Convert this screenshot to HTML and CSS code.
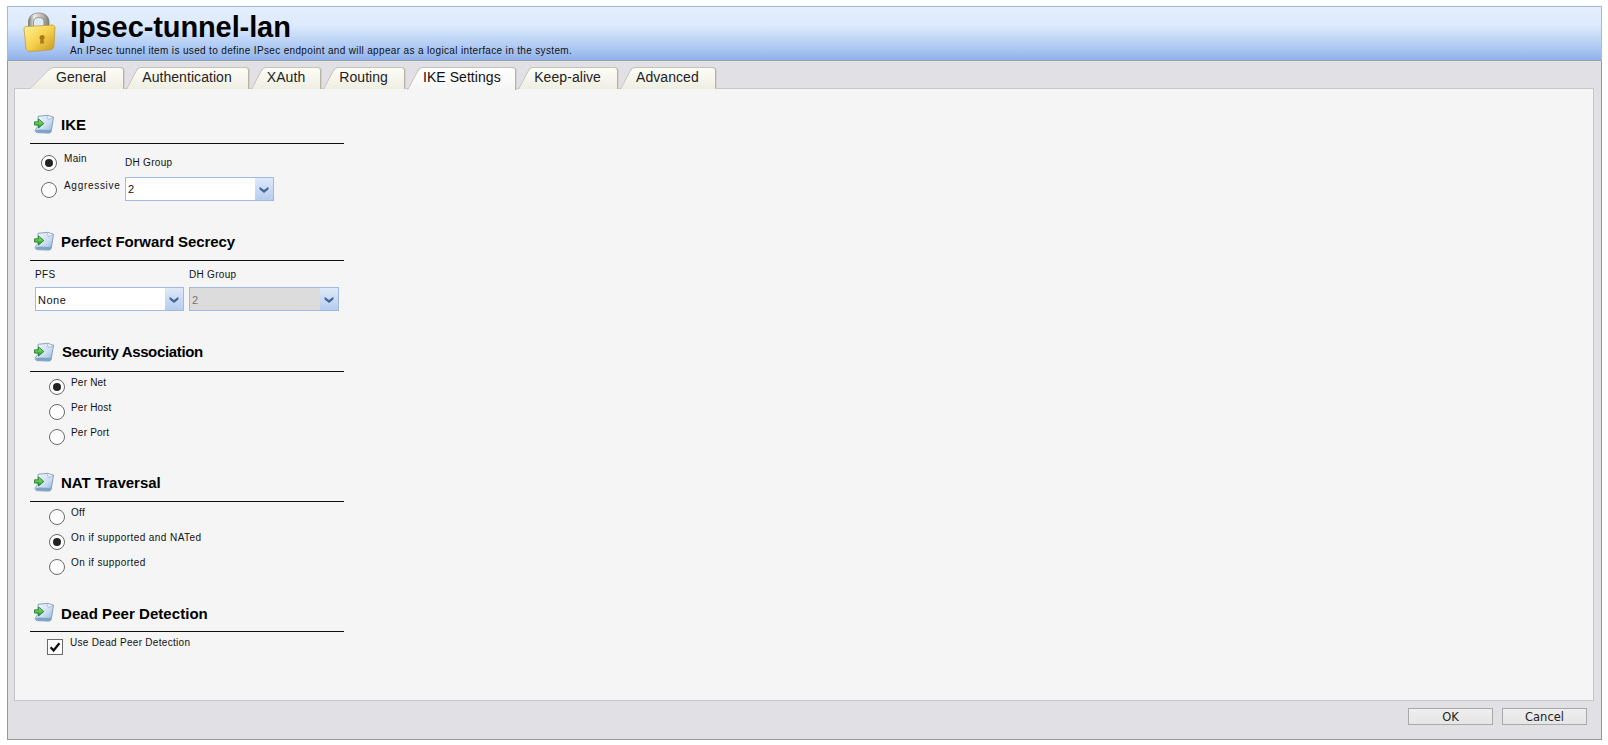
FILE: index.html
```html
<!DOCTYPE html>
<html lang="en">
<head>
<meta charset="utf-8">
<title>ipsec-tunnel-lan</title>
<link rel="stylesheet" href="styles.css">
</head>
<body>
<svg class="defs" width="0" height="0" aria-hidden="true">
  <defs>
    <linearGradient id="pg" x1="0" y1="0" x2="1" y2="1"><stop offset="0" stop-color="#f6f9fd"/><stop offset=".6" stop-color="#c9dcef"/><stop offset="1" stop-color="#84acd6"/></linearGradient>
    <linearGradient id="ag" x1="0" y1="0" x2="0" y2="1"><stop offset="0" stop-color="#a2e86a"/><stop offset="1" stop-color="#1d9f30"/></linearGradient>
    <symbol id="sec" viewBox="0 0 22 22">
      <path d="M4.5 2.5 L15 1.5 L21.5 3.5 L19 18.5 C18.7 20.5 17.6 21 16 21 L3.5 20.5 C2 20.3 1.2 19.3 1.2 18 L4 14 Z" fill="url(#pg)" stroke="#6f92b3" stroke-width=".9"/>
      <path d="M2 18 C5 16.5 10 17 15.5 17.6 C17 17.8 18.2 17.4 19.3 16.3 L18.8 19 C18.5 20.4 17.5 20.8 16 20.8 L3.6 20.2 C2.5 20 1.9 19.2 2 18 Z" fill="#7ea3c9"/>
      <path d="M14.8 1.8 L15.6 6.2 L21.2 4" fill="#eef4fb" stroke="#8fabc7" stroke-width=".7"/>
      <path d="M.6 8.6 H5 V5.4 L10.8 10.4 L5 15.4 V12.2 H.6 Z" fill="url(#ag)" stroke="#16782a" stroke-width=".9"/>
    </symbol>
    <symbol id="chev" viewBox="0 0 18 24">
      <path d="M4.2 9.5 L9 13.2 L13.8 9.5 L13.8 12.5 L9 16.4 L4.2 12.5 Z" fill="#46669a"/>
    </symbol>
  </defs>
</svg>
<main class="frame">
  <header class="top">
    <svg class="lock" viewBox="0 0 36 40" width="36" height="40" aria-hidden="true">
      <defs>
        <linearGradient id="sh" x1="0" y1="0" x2="1" y2="0"><stop offset="0" stop-color="#77776e"/><stop offset=".28" stop-color="#eeeee6"/><stop offset=".7" stop-color="#b4b4aa"/><stop offset="1" stop-color="#7d7d74"/></linearGradient>
        <linearGradient id="bd" x1="0" y1="0" x2="1" y2="1"><stop offset="0" stop-color="#fff19a"/><stop offset=".5" stop-color="#f6d24f"/><stop offset="1" stop-color="#c8961f"/></linearGradient>
      </defs>
      <path d="M6.5 16 V10 C6.5 4 11 1 16.5 1 C22.5 1 27 4 27 10 V15 H22 V10 C22 7 20 5.5 16.5 5.5 C13.5 5.5 11.5 7 11.5 10 V15.5 Z" fill="url(#sh)" stroke="#77776f" stroke-width=".7"/>
      <path d="M2 17 C2 15 3 14.5 5 14.5 L30 13 C32 13 33 14 33 16 L32 33 C32 36 30.5 37.5 28 37.8 L9 39.5 C6 39.5 4.5 38.5 4 36 Z" fill="url(#bd)" stroke="#c0952a" stroke-width=".7"/>
      <path d="M20 23 C21.8 23 22.8 24.2 22.7 25.6 C22.6 26.5 22.2 27.2 21.5 27.7 L22 31.5 H18 L18.5 27.8 C17.8 27.3 17.4 26.5 17.5 25.6 C17.6 24.1 18.7 23 20 23 Z" fill="#a9791a"/>
    </svg>
    <div class="top-text">
      <h1 class="title">ipsec-tunnel-lan</h1>
      <p class="sub">An IPsec tunnel item is used to define IPsec endpoint and will appear as a logical interface in the system.</p>
    </div>
  </header>

  <nav class="tabs">
    <a class="tab tab-first">General</a>
    <a class="tab t2">Authentication</a>
    <a class="tab t3">XAuth</a>
    <a class="tab t4">Routing</a>
    <a class="tab active">IKE Settings</a>
    <a class="tab t6">Keep-alive</a>
    <a class="tab t7">Advanced</a>
  </nav>

  <section class="panel">
    <div class="column">
      <div class="group g-ike">
        <h2 class="head"><svg class="sec-ico"><use href="#sec"/></svg><span>IKE</span></h2>
        <div class="ike-body">
          <div class="ike-radios">
            <label class="opt"><input class="radio" type="radio" name="ike" checked><span>Main</span></label>
            <label class="opt"><input class="radio" type="radio" name="ike"><span class="wide">Aggressive</span></label>
          </div>
          <div class="field">
            <span class="lbl">DH Group</span>
            <div class="select"><span class="val">2</span><span class="arrow"><svg width="18" height="22"><use href="#chev"/></svg></span></div>
          </div>
        </div>
      </div>

      <div class="group g-pfs">
        <h2 class="head head-pfs"><svg class="sec-ico"><use href="#sec"/></svg><span>Perfect Forward Secrecy</span></h2>
        <div class="pfs-body">
          <div class="field">
            <span class="lbl">PFS</span>
            <div class="select"><span class="val">None</span><span class="arrow"><svg width="18" height="22"><use href="#chev"/></svg></span></div>
          </div>
          <div class="field">
            <span class="lbl">DH Group</span>
            <div class="select disabled"><span class="val">2</span><span class="arrow"><svg width="18" height="22"><use href="#chev"/></svg></span></div>
          </div>
        </div>
      </div>

      <div class="group g-sa">
        <h2 class="head head-sa"><svg class="sec-ico"><use href="#sec"/></svg><span>Security Association</span></h2>
        <div class="opts">
          <label class="opt"><input class="radio" type="radio" name="sa" checked><span class="tight">Per Net</span></label>
          <label class="opt"><input class="radio" type="radio" name="sa"><span class="tight">Per Host</span></label>
          <label class="opt"><input class="radio" type="radio" name="sa"><span class="tight">Per Port</span></label>
        </div>
      </div>

      <div class="group g-nat">
        <h2 class="head"><svg class="sec-ico"><use href="#sec"/></svg><span>NAT Traversal</span></h2>
        <div class="opts">
          <label class="opt"><input class="radio" type="radio" name="nat"><span>Off</span></label>
          <label class="opt"><input class="radio" type="radio" name="nat" checked><span class="mid">On if supported and NATed</span></label>
          <label class="opt"><input class="radio" type="radio" name="nat"><span class="mid">On if supported</span></label>
        </div>
      </div>

      <div class="group g-dpd">
        <h2 class="head head-dpd"><svg class="sec-ico"><use href="#sec"/></svg><span>Dead Peer Detection</span></h2>
        <div class="opts opts-check">
          <label class="opt"><span class="check"><svg width="14" height="14" viewBox="0 0 14 14"><path d="M2.6 7.2 L5.6 10.4 L11.4 3.2" fill="none" stroke="#111" stroke-width="2.3"/></svg></span><span>Use Dead Peer Detection</span></label>
        </div>
      </div>
    </div>
  </section>

  <footer class="foot">
    <button class="btn" type="button">OK</button>
    <button class="btn" type="button">Cancel</button>
  </footer>
</main>
</body>
</html>
```
FILE: styles.css
```css
* { box-sizing: border-box; }
html, body { margin: 0; padding: 0; background: #fff; }
body { width: 1608px; height: 745px; overflow: hidden; padding: 6px 0 0 7px; font-family: "Liberation Sans", Arial, sans-serif; color: #111; }
.defs { position: absolute; }

.frame { width: 1595px; height: 734px; display: flex; flex-direction: column; background: #e0e0e5; border-left: 1px solid #979797; border-right: 1px solid #979797; border-bottom: 1px solid #979797; }

.top { height: 55px; flex: none; display: flex; background: linear-gradient(#e3eefe 0, #deebfd 34%, #b3cdf4 72%, #8fb2ea 100%); border-top: 1px solid #a3bbdc; border-bottom: 1px solid #9a9fa8; padding-left: 14px; margin: 0 -1px 0 -1px; border-left: 1px solid #a3bbdc; border-right: 1px solid #a3bbdc; }
.lock { flex: none; margin-top: 5px; }
.top-text { margin-left: 12px; }
.title { margin: 4px 0 0; font-size: 29px; line-height: 32px; font-weight: 700; color: #000; letter-spacing: -.1px; }
.sub { margin: 2px 0 0; font-size: 10px; line-height: 11px; color: #111; letter-spacing: .35px; }

.tabs { height: 28px; flex: none; display: flex; padding: 6px 0 0 30px; position: relative; z-index: 2; margin-bottom: -1px; }
.tab { position: relative; isolation: isolate; height: 23px; padding: 0 17px 0 18px; font-size: 14px; line-height: 20px; letter-spacing: .06px; color: #222; }
.tab::before { content: ""; position: absolute; z-index: -1; left: 2px; top: 0; bottom: 1px; width: 30px; background: linear-gradient(#fdfdf8, #efeee2); border-left: 1px solid #bdbcaa; border-top: 1px solid #c4c3b2; border-top-left-radius: 4px; transform: skewX(-28deg); transform-origin: bottom left; }
.tab::after { content: ""; position: absolute; z-index: -1; left: 20px; right: 0; top: 0; bottom: 1px; background: linear-gradient(#fdfdf8, #efeee2); border-top: 1px solid #c4c3b2; border-right: 1px solid #b5b4a3; border-top-right-radius: 4px; box-shadow: 1px 0 0 #d2d2d2; }
.tab-first { z-index: 7; padding-right: 18px; }
.tab-first::before { left: -9px; width: 34px; transform: skewX(-45deg); }
.tab-first::after { left: 25px; }
.t2 { z-index: 6; }
.t3 { z-index: 5; padding-right: 16px; }
.t4 { z-index: 4; }
.t6 { z-index: 3; }
.t7 { z-index: 2; }
.active { z-index: 8; color: #111; padding-right: 15.5px; }
.active::before, .active::after { background: linear-gradient(#fff, #f5f5f5); bottom: 0; height: auto; }
.active::after { border-right-color: #b5b5a8; }

.panel { flex: 1; margin: 0 7px 0 6px; background: #f5f5f5; border: 1px solid #c6c6c6; position: relative; z-index: 1; }
.column { width: 314px; margin-left: 15px; }

.group { display: block; }
.head { height: 34px; margin: 0; display: flex; align-items: center; gap: 7px; padding: 0 0 5px 4px; font-size: 15px; font-weight: 700; color: #000; border-bottom: 1px solid #111; line-height: 20px; }
.head span { padding-top: 2px; }
.head-pfs span { letter-spacing: -.08px; }
.head-sa { gap: 8px; }
.head-sa span { padding-top: 0; letter-spacing: -.35px; }
.head-dpd span { padding-top: 3px; letter-spacing: .05px; }
.sec-ico { width: 20px; height: 20px; flex: none; }
.g-ike { padding-top: 21px; height: 138px; }
.g-pfs { height: 111px; }
.g-sa { height: 130px; }
.g-nat { height: 130px; }

.lbl, .opt span { font-size: 10px; line-height: 12px; letter-spacing: .3px; color: #111; }
.opt span.wide { letter-spacing: .7px; }
.opt span.mid { letter-spacing: .42px; }
.opt span.tight { letter-spacing: .2px; }
.opt { display: flex; align-items: flex-start; gap: 5px; height: 25px; }
.opt > span:not(.check) { margin-top: -2px; }
.radio { appearance: none; -webkit-appearance: none; margin: 0; width: 16px; height: 16px; flex: none; border-radius: 50%; background: #fff; border: 1px solid #6a6a6a; position: relative; }
.radio:checked::after { content: ""; position: absolute; left: 3px; top: 3px; width: 8px; height: 8px; border-radius: 50%; background: #222; }

.ike-body { display: flex; padding: 11px 0 0 11px; }
.ike-radios { width: 84px; }
.ike-radios .opt { height: 28px; gap: 7px; }
.ike-radios .opt:first-child { height: 27px; }
.field { display: flex; flex-direction: column; }
.field .lbl { height: 20px; padding-top: 2px; }
.select { width: 149px; height: 24px; display: flex; align-items: center; background: #fff; border: 1px solid #9fbbe4; }
.val { flex: 1; font-size: 11px; line-height: 14px; padding-left: 2px; color: #111; letter-spacing: .5px; }
.arrow { width: 18px; height: 22px; flex: none; background: linear-gradient(#dfe9f9, #b6cdf0); display: block; }
.arrow svg { display: block; }
.disabled { background: #dcdcdc; }
.disabled .val { color: #777; }

.ike-body .lbl { height: 22px; }
.pfs-body { display: flex; gap: 5px; padding: 6px 0 0 5px; }
.pfs-body .field:last-child .select { width: 150px; }
.pfs-body .field .lbl { height: 20px; }
.pfs-body .val { padding-top: 2px; }

.opts { padding: 7px 0 0 19px; }
.opts .opt { gap: 6px; }
.opts-check { padding: 7px 0 0 17px; }
.opts-check .opt { gap: 7px; }
.check { width: 16px; height: 16px; flex: none; background: #fff; border: 1px solid #6a6a6a; display: flex; align-items: center; justify-content: center; margin-top: 0; }
.check svg { display: block; }

.foot { flex: none; height: 38px; display: flex; justify-content: flex-end; gap: 9px; padding: 7px 14px 0 0; }
.btn { width: 85px; height: 17px; padding: 0; margin: 0; background: linear-gradient(#eeeeee, #e6e6e6); border: 1px solid #a9a9a9; font-family: "DejaVu Sans", sans-serif; font-size: 11.5px; line-height: 14px; color: #222; }
```
